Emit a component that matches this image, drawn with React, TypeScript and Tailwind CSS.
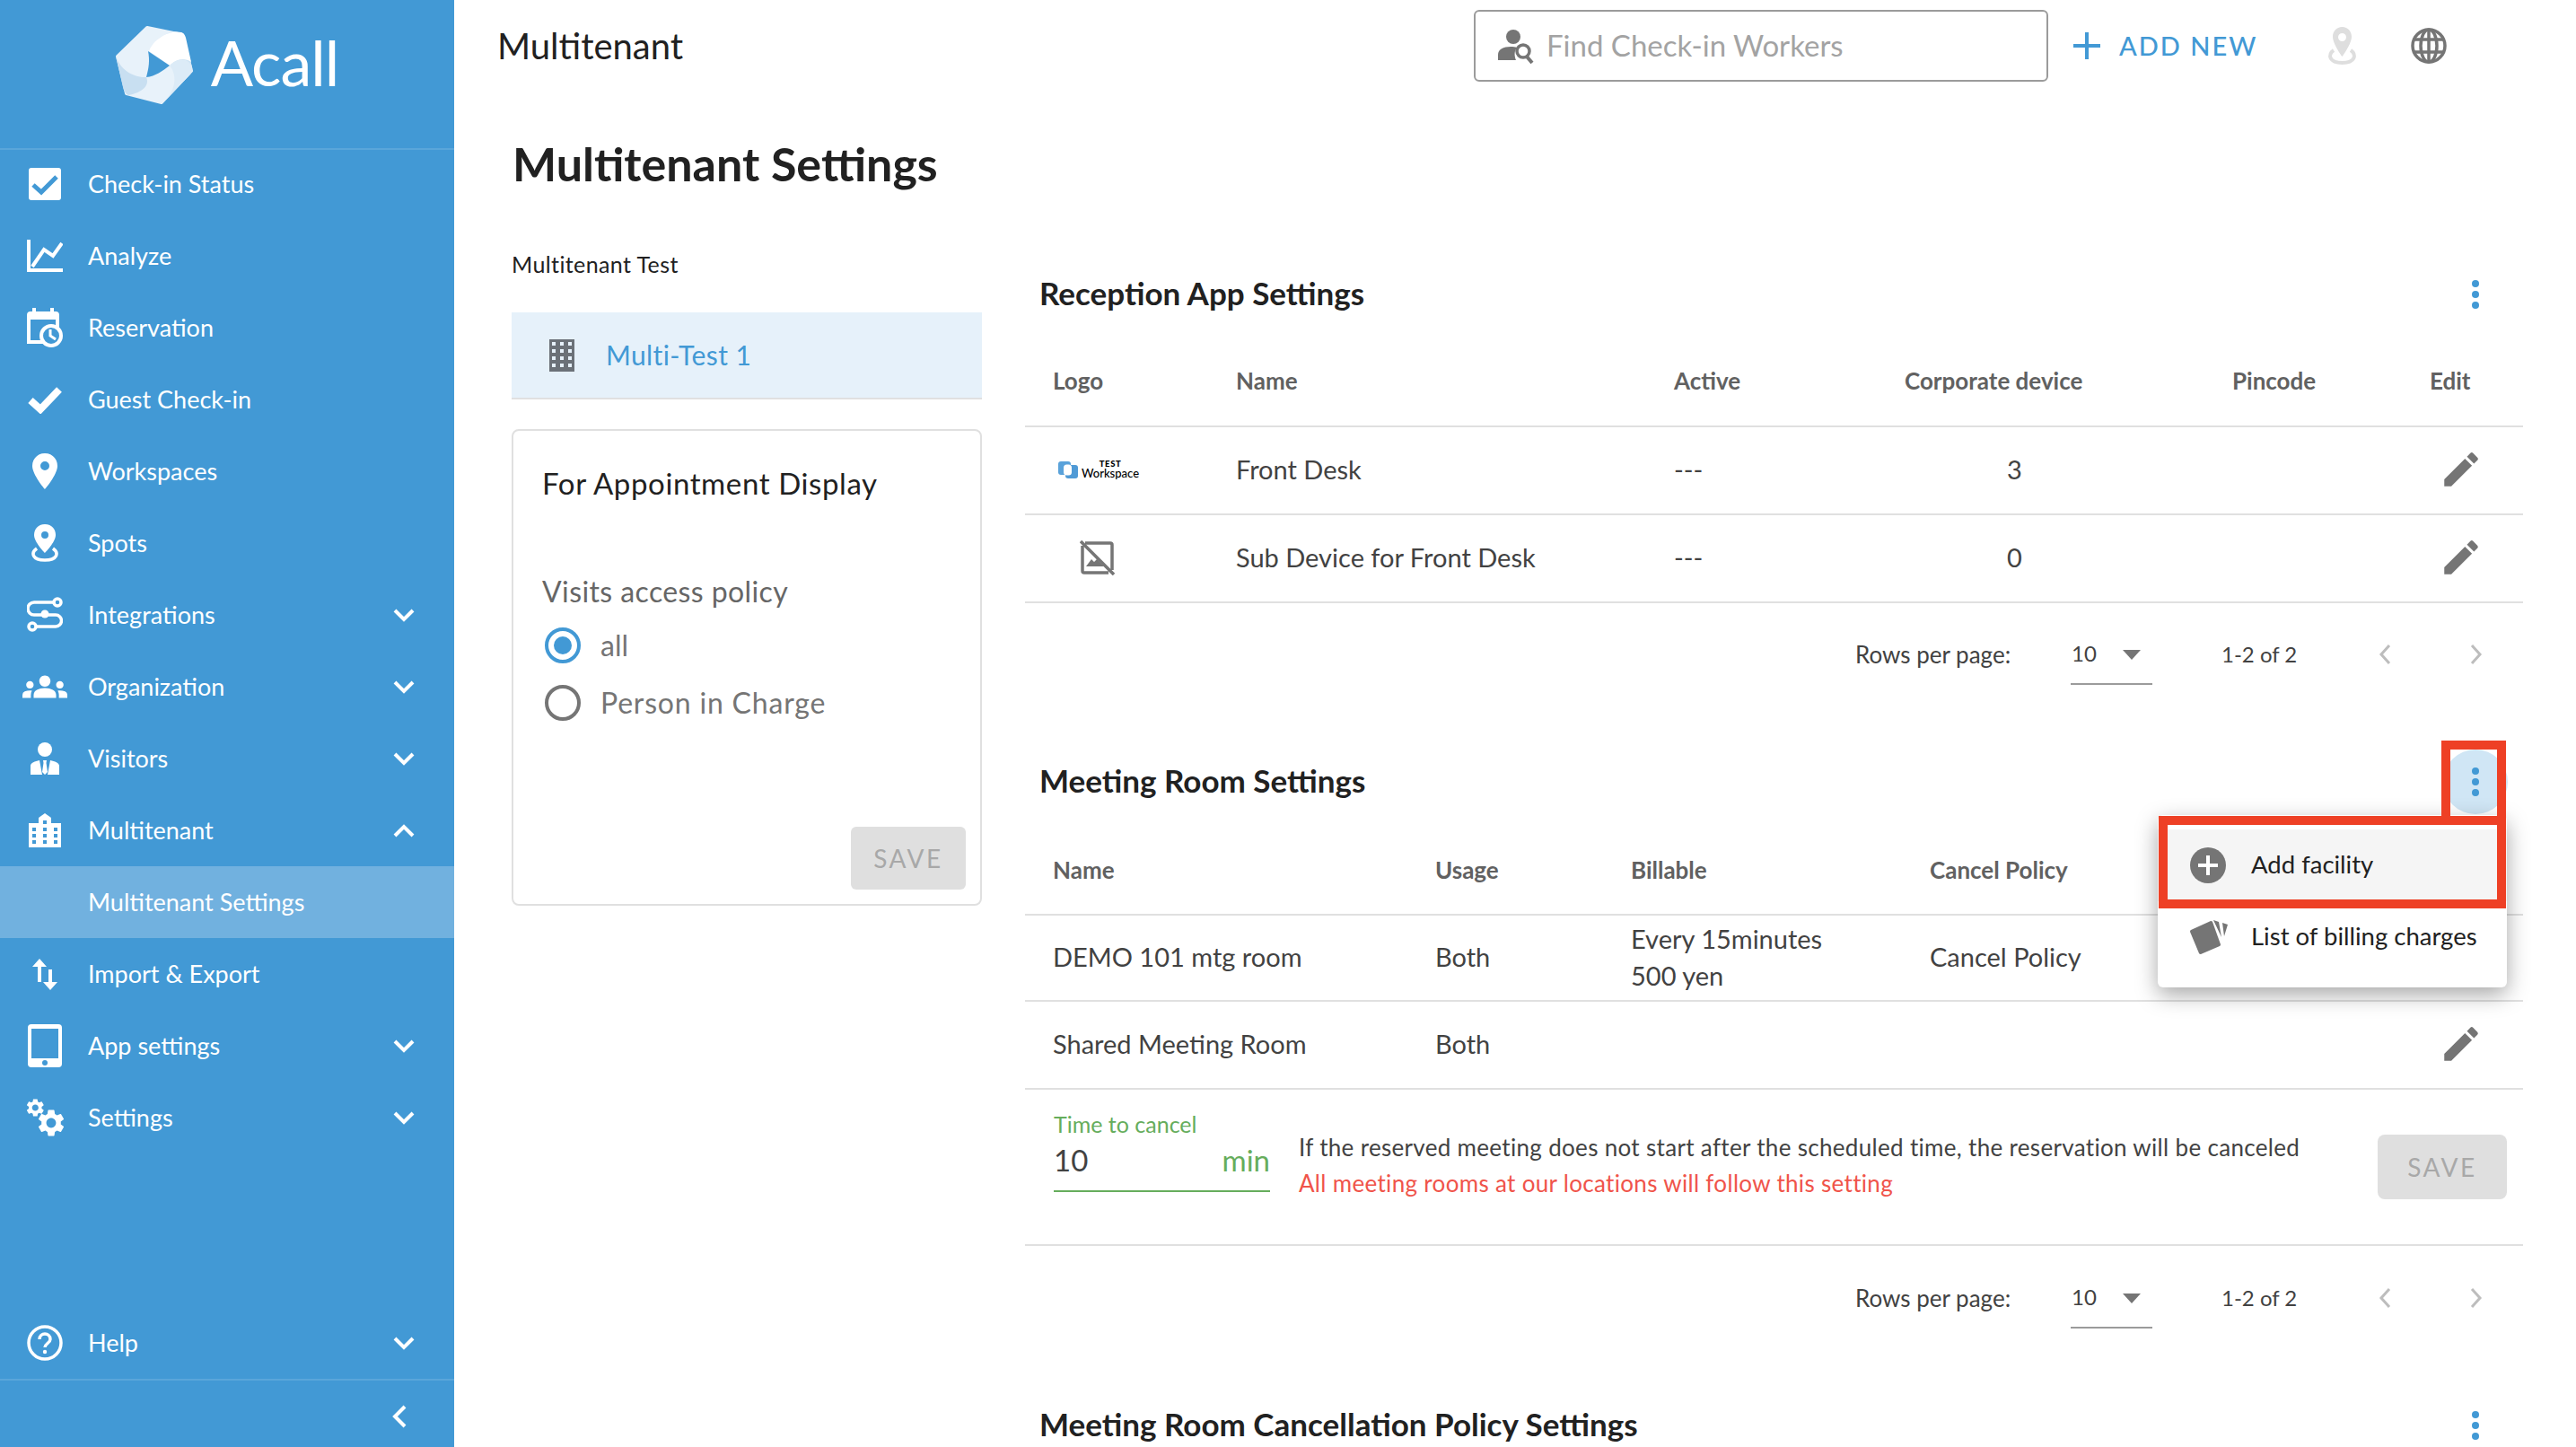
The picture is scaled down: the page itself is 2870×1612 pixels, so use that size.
import React from 'react';
import { MdEdit, MdGroups } from 'react-icons/md';

const GEAR =
  'M19.14 12.94c.04-.3.06-.61.06-.94 0-.32-.02-.64-.07-.94l2.03-1.58c.18-.14.23-.41.12-.61l-1.92-3.32c-.12-.22-.37-.29-.59-.22l-2.39.96c-.5-.38-1.03-.7-1.62-.94l-.36-2.54c-.04-.24-.24-.41-.48-.41h-3.84c-.24 0-.43.17-.47.41l-.36 2.54c-.59.24-1.13.57-1.62.94l-2.39-.96c-.22-.08-.47 0-.59.22L2.74 8.87c-.12.21-.08.47.12.61l2.03 1.58c-.05.3-.09.63-.09.94s.02.64.07.94l-2.03 1.58c-.18.14-.23.41-.12.61l1.92 3.32c.12.22.37.29.59.22l2.39-.96c.5.38 1.03.7 1.62.94l.36 2.54c.05.24.24.41.48.41h3.84c.24 0 .44-.17.47-.41l.36-2.54c.59-.24 1.13-.56 1.62-.94l2.39.96c.22.08.47 0 .59-.22l1.92-3.32c.12-.22.07-.47-.12-.61l-2.01-1.58zM12 15.6c-1.98 0-3.6-1.62-3.6-3.6s1.62-3.6 3.6-3.6 3.6 1.62 3.6 3.6-1.62 3.6-3.6 3.6z';

const BLUE = '#4299d5';

// sidebar icons, drawn in the pixel size they have in the screen
const CheckStatusIcon = () => (
  <svg width="36" height="36" viewBox="0 0 36 36">
    <rect width="36" height="36" rx="3" fill="#fff" />
    <path d="M5 19l9 8L31 10" fill="none" stroke={BLUE} strokeWidth="5" />
  </svg>
);

const AnalyzeIcon = () => (
  <svg width="40" height="36" viewBox="0 0 40 36">
    <path d="M2 0v34h38" fill="none" stroke="#fff" strokeWidth="4" />
    <path d="M6 30L19 11l10 7L39 4" fill="none" stroke="#fff" strokeWidth="4" />
  </svg>
);

const ReservationIcon = () => (
  <svg width="40" height="44" viewBox="0 0 40 44">
    <path d="M6 0h4v4h16V0h4v4h2a4 4 0 014 4v32H0V8a4 4 0 014-4h2z" fill="#fff" />
    <rect x="4" y="13" width="28" height="23" fill={BLUE} />
    <circle cx="27" cy="31" r="11" fill={BLUE} stroke="#fff" strokeWidth="4" />
    <path d="M26 24v7l6 4" fill="none" stroke="#fff" strokeWidth="3" />
  </svg>
);

const GuestCheckIcon = () => (
  <svg width="38" height="31" viewBox="0 0 38 31">
    <path d="M3 16l11 10L35 4" fill="none" stroke="#fff" strokeWidth="8" />
  </svg>
);

const WorkspacesIcon = () => (
  <svg width="28" height="40" viewBox="0 0 28 40">
    <path
      fillRule="evenodd"
      fill="#fff"
      d="M14 0C6 0 0 6 0 14c0 10 14 26 14 26s14-16 14-26C28 6 22 0 14 0zm0 9a5 5 0 110 10 5 5 0 010-10z"
    />
  </svg>
);

const SpotsIcon = () => (
  <svg width="32" height="42" viewBox="0 0 32 42">
    <path
      fillRule="evenodd"
      fill="#fff"
      d="M16 0C8 0 4 6 4 12c0 8 12 20 12 20s12-12 12-20c0-6-4-12-12-12zm0 8a4 4 0 110 8 4 4 0 010-8z"
    />
    <path d="M7 27C0 32 2 40 16 40s16-8 9-13" fill="none" stroke="#fff" strokeWidth="3.5" />
  </svg>
);

const IntegrationsIcon = () => (
  <svg width="40" height="40" viewBox="0 0 40 40" fill="none" stroke="#fff" strokeWidth="3.5">
    <circle cx="34" cy="6" r="4" />
    <circle cx="6" cy="33" r="4" />
    <path d="M30 6H8a6 6 0 000 14h24a6 6 0 010 13H10" />
    <circle cx="20" cy="19" r="4.5" fill="#fff" stroke="none" />
  </svg>
);

const VisitorsIcon = () => (
  <svg width="32" height="36" viewBox="0 0 32 36" fill="#fff">
    <circle cx="16" cy="8" r="8" />
    <path d="M0 36V26c0-3 5-5 10-6l3 16zM32 36V26c0-3-5-5-10-6l-3 16z" />
    <path d="M14 20h4l-.5 3 1.5 10-3 3-3-3 1.5-10z" />
  </svg>
);

const BuildingIcon = () => {
  const windows = [4, 16, 28].flatMap((x) => [16, 23, 30].map((y) => [x, y]));
  return (
    <svg width="36" height="38" viewBox="0 0 36 38">
      <path d="M0 11h11V5l7-5 7 5v6h11v27H0z" fill="#fff" />
      {windows.map(([x, y]) => (
        <rect key={`${x}-${y}`} x={x} y={y} width="4" height="4" fill={BLUE} />
      ))}
      <rect x="16" y="8" width="4" height="4" fill={BLUE} />
    </svg>
  );
};

const ImportIcon = () => (
  <svg width="28" height="35" viewBox="0 0 28 35" fill="#fff">
    <path d="M0 9l8-9 8 9h-6v17H6V9zM28 26l-8 9-8-9h6V12h4v14z" />
  </svg>
);

const TabletIcon = () => (
  <svg width="38" height="48" viewBox="0 0 38 48">
    <rect width="38" height="48" rx="4" fill="#fff" />
    <rect x="4" y="5" width="30" height="33" fill={BLUE} />
    <circle cx="19" cy="43" r="3" fill={BLUE} />
  </svg>
);

const SettingsIcon = () => (
  <svg width="42" height="42" viewBox="0 0 42 42" fill="#fff">
    <path d={GEAR} transform="translate(-1.7 -2)" />
    <path d={GEAR} transform="translate(10 9) scale(1.5)" />
  </svg>
);

const HelpIcon = () => (
  <svg width="40" height="40" viewBox="0 0 40 40" fill="none" stroke="#fff" strokeWidth="3.5">
    <circle cx="20" cy="20" r="18" />
    <path d="M14 16c0-4 3-6 6-6s6 2 6 6c0 4-6 5-6 9" />
    <circle cx="20" cy="30" r="2.2" fill="#fff" stroke="none" />
  </svg>
);

const Chevron = ({ up }: { up?: boolean }) => (
  <svg width="24" height="15" viewBox="0 0 24 15">
    <path d={up ? 'M2 13L12 3l10 10' : 'M2 2l10 10L22 2'} fill="none" stroke="#fff" strokeWidth="4" />
  </svg>
);

const navItems = [
  { label: 'Check-in Status', icon: <CheckStatusIcon /> },
  { label: 'Analyze', icon: <AnalyzeIcon /> },
  { label: 'Reservation', icon: <ReservationIcon /> },
  { label: 'Guest Check-in', icon: <GuestCheckIcon /> },
  { label: 'Workspaces', icon: <WorkspacesIcon /> },
  { label: 'Spots', icon: <SpotsIcon /> },
  { label: 'Integrations', icon: <IntegrationsIcon />, arrow: 'down' },
  { label: 'Organization', icon: <MdGroups size={50} />, arrow: 'down' },
  { label: 'Visitors', icon: <VisitorsIcon />, arrow: 'down' },
  { label: 'Multitenant', icon: <BuildingIcon />, arrow: 'up' },
  { label: 'Multitenant Settings', active: true },
  { label: 'Import & Export', icon: <ImportIcon /> },
  { label: 'App settings', icon: <TabletIcon />, arrow: 'down' },
  { label: 'Settings', icon: <SettingsIcon />, arrow: 'down' },
];

type NavItem = { label: string; icon?: React.ReactNode; arrow?: string; active?: boolean };

const NavRow = ({ item }: { item: NavItem }) => (
  <div className={`flex h-[80px] items-center ${item.active ? 'bg-[#71b1df]' : ''}`}>
    <div className="flex w-[98px] shrink-0 justify-center pl-[2px]">{item.icon}</div>
    <span className="text-[27px]">{item.label}</span>
    {item.arrow && (
      <span className="mr-[44px] ml-auto flex">
        <Chevron up={item.arrow === 'up'} />
      </span>
    )}
  </div>
);

const Logo = () => (
  <div className="flex items-center">
    <svg width="86" height="87" viewBox="0 0 86 87">
      <path d="M35 2L74 10 84 50 51 85 12 75 2 34z" fill="#e8f2fa" stroke="#e8f2fa" strokeWidth="4" strokeLinejoin="round" />
      <path d="M35 0C30 8 31 20 37 28L60 44C68 37 78 36 85 46L75 8C62 4 46 10 37 28 31 20 30 8 35 0z" fill="#cfe4f4" />
      <path d="M37 28C42 14 60 4 73 7 76 8 77 10 78 13L84 40C75 34 66 38 60 44z" fill="#fff" />
      <path d="M0 33C4 48 20 58 34 57 38 66 30 74 14 77 11 76 9 72 8 68z" fill="#c8dff1" />
      <path d="M60 44C70 34 82 36 85 46 86 50 84 53 82 55L54 84C68 70 68 54 60 44z" fill="#dcebf7" />
      <path d="M36 28L60 44C52 50 44 56 34 57 37 46 38 38 36 28z" fill={BLUE} />
    </svg>
    <span className="-mt-[7px] ml-[20px] text-[70px] leading-none tracking-[-1px]">Acall</span>
  </div>
);

const Sidebar = () => (
  <aside className="flex h-full w-[506px] shrink-0 flex-col bg-[#4299d5] text-white">
    <div className="flex h-[167px] shrink-0 items-center justify-center border-b-2 border-[#5aa6da] pb-[21px]">
      <Logo />
    </div>
    <div className="-mt-[2px]">
      {navItems.map((item) => (
        <NavRow key={item.label} item={item} />
      ))}
    </div>
    <div className="mt-auto">
      <NavRow item={{ label: 'Help', icon: <HelpIcon />, arrow: 'down' }} />
    </div>
    <div className="flex h-[76px] items-center border-t-2 border-[#5aa6da]">
      <svg className="mt-[6px] ml-[437px]" width="16" height="26" viewBox="0 0 16 26">
        <path d="M14 2L3 13l11 11" fill="none" stroke="#fff" strokeWidth="4" />
      </svg>
    </div>
  </aside>
);

const Header = () => (
  <header className="flex h-[102px] shrink-0 items-center pl-[48px]">
    <h1 className="w-[1088px] text-[40px] text-[#212121]">Multitenant</h1>
    <div className="flex h-[80px] w-[640px] items-center rounded-[6px] border-2 border-[#9b9b9b] pl-[25px]">
      <svg width="42" height="40" viewBox="0 0 42 40" fill="#757575">
        <circle cx="17" cy="10" r="8" />
        <path d="M0 36v-6c0-6 6-9 14-9 3 0 5 .4 7 1-3 4-3 9-1 14z" />
        <circle cx="28" cy="26" r="7" fill="none" stroke="#757575" strokeWidth="3.5" />
        <path d="M32 32l6 7" stroke="#757575" strokeWidth="4" />
      </svg>
      <span className="ml-[12px] text-[33px] text-[#a3a3a3]">Find Check-in Workers</span>
    </div>
    <svg className="ml-[28px]" width="30" height="30" viewBox="0 0 30 30">
      <path d="M15 0v30M0 15h30" stroke={BLUE} strokeWidth="4" />
    </svg>
    <span className="ml-[21px] text-[29px] font-medium tracking-[2px] text-[#4299d5]">ADD NEW</span>
    <svg className="ml-[78px]" width="33" height="42" viewBox="0 0 33 42" fill="#dedede">
      <path
        fillRule="evenodd"
        d="M16.5 0C10 0 6 5 6 11c0 8 10.500 22 10.500 22S27 19 27 11c0-6-4-11-10.500-11zm0 7a4.500 4.500 0 110 9 4.500 4.500 0 010-9z"
      />
      <path d="M7 26C0 31 2 40 16.500 40S33 31 26 26" fill="none" stroke="#dedede" strokeWidth="4" />
    </svg>
    <svg className="ml-[60px]" width="40" height="40" viewBox="0 0 40 40" fill="none" stroke="#757575" strokeWidth="3.5">
      <circle cx="20" cy="20" r="18" />
      <ellipse cx="20" cy="20" rx="9" ry="18" />
      <path d="M20 2v36M3 13h34M3 27h34" />
    </svg>
  </header>
);

const LeftPanel = () => (
  <div className="flex w-[524px] shrink-0 flex-col">
    <div className="flex h-[62px] items-center text-[25px] tracking-[0.4px] text-[#212121]">Multitenant Test</div>
    <div className="mt-[22px] flex h-[97px] items-center border-b-2 border-[#e0e0e0] bg-[#e6f1fa] pl-[42px]">
      <svg width="28" height="36" viewBox="0 0 28 36">
        <rect width="28" height="36" fill="#6b7178" />
        {[3, 12, 21].flatMap((x) =>
          [3, 11, 19, 27].map((y) => <rect key={`${x}-${y}`} x={x} y={y} width="4" height="4" fill="#e6f1fa" />),
        )}
      </svg>
      <span className="ml-[35px] text-[30px] tracking-[0.4px] text-[#4299d5]">Multi-Test 1</span>
    </div>
    <div className="mt-[33px] flex h-[531px] flex-col rounded-[8px] border-2 border-[#e0e0e0] pt-[39px] pr-[16px] pb-[16px] pl-[32px]">
      <div className="flex h-[40px] items-center text-[33px] tracking-[0.6px] text-[#212121]">For Appointment Display</div>
      <div className="mt-[80px] flex h-[40px] items-center text-[32px] tracking-[0.4px] text-[#666]">Visits access policy</div>
      <div className="mt-[8px] flex h-[64px] items-center text-[32px] text-[#757575]">
        <span className="ml-[3px] flex h-[40px] w-[40px] items-center justify-center rounded-full border-4 border-[#4299d5]">
          <span className="h-[20px] w-[20px] rounded-full bg-[#4299d5]" />
        </span>
        <span className="ml-[22px]">all</span>
      </div>
      <div className="flex h-[64px] items-center text-[32px] tracking-[0.8px] text-[#757575]">
        <span className="ml-[3px] h-[40px] w-[40px] rounded-full border-4 border-[#757575]" />
        <span className="ml-[22px]">Person in Charge</span>
      </div>
      <button className="mt-auto flex h-[70px] w-[128px] items-center justify-center self-end rounded-[6px] bg-[#dfdfdf] text-[28px] tracking-[2.5px] text-[#a8a8a8]">
        SAVE
      </button>
    </div>
  </div>
);

const Dots = () => (
  <svg width="8" height="32" viewBox="0 0 8 32" fill={BLUE}>
    <circle cx="4" cy="4" r="4" />
    <circle cx="4" cy="16" r="4" />
    <circle cx="4" cy="28" r="4" />
  </svg>
);

const SectionHead = ({ title, open }: { title: string; open?: boolean }) => (
  <div className="flex h-[64px] items-center pr-[17px] pl-[16px]">
    <h2 className="mb-[3px] text-[35px] font-bold text-[#212121]">{title}</h2>
    <span
      className={`ml-auto flex h-[72px] w-[72px] shrink-0 items-center justify-center rounded-full ${open ? 'bg-[#d0e6f5]' : ''}`}
    >
      <Dots />
    </span>
  </div>
);

const Pencil = () => (
  <div className="flex justify-end pr-[44px] text-[#757575]">
    <MdEdit size={50} />
  </div>
);

const Pagination = ({ height }: { height: string }) => (
  <div className={`flex items-center pl-[925px] text-[#424242] ${height}`}>
    <span className="w-[240px] text-[26px]">Rows per page:</span>
    <div className="flex h-[68px] w-[91px] items-center border-b-2 border-[#9b9b9b] text-[24px]">
      <span className="ml-[1px]">10</span>
      <svg className="mt-[2px] ml-[29px]" width="20" height="11" viewBox="0 0 20 11">
        <path d="M0 0h20L10 11z" fill="#757575" />
      </svg>
    </div>
    <span className="ml-[77px] w-[82px] text-[24px] whitespace-nowrap">1-2 of 2</span>
    <svg className="ml-[93px]" width="14" height="24" viewBox="0 0 14 24">
      <path d="M12 2L3 12l9 10" fill="none" stroke="#bdbdbd" strokeWidth="3" />
    </svg>
    <svg className="ml-[88px]" width="14" height="24" viewBox="0 0 14 24">
      <path d="M2 2l9 10-9 10" fill="none" stroke="#bdbdbd" strokeWidth="3" />
    </svg>
  </div>
);

const NoImageIcon = () => (
  <svg className="ml-[30px]" width="39" height="39" viewBox="0 0 39 39" fill="none" stroke="#757575" strokeWidth="3.5">
    <path d="M6 3h28a2 2 0 012 2v28M32 36H5a2 2 0 01-2-2V6" />
    <path d="M1 1l37 37" />
    <path d="M7 29l6-8 3 3 3-3 8 8z" fill="#757575" stroke="none" />
  </svg>
);

const ReceptionLogo = () => (
  <div className="flex items-center pl-[6px]">
    <svg width="22" height="19" viewBox="0 0 22 19">
      <rect width="14" height="15" rx="3" fill="#5aa2da" />
      <rect x="8" y="4" width="14" height="15" rx="3" fill="#4f9ad6" />
      <rect x="6" y="3.500" width="9" height="12" rx="3.500" fill="#fff" />
    </svg>
    <div className="ml-[4px] flex flex-col items-center text-black">
      <span className="text-[9.5px] leading-[9px] font-black tracking-[0.6px]">TEST</span>
      <span className="text-[13px] leading-[13px] font-medium whitespace-nowrap">Workspace</span>
    </div>
  </div>
);

const Reception = () => {
  const cols = 'grid grid-cols-[235px_488px_257px_365px_220px_104px] items-center border-b-2 border-[#e0e0e0]';
  const rows = [
    { logo: <ReceptionLogo />, name: 'Front Desk', device: '3' },
    { logo: <NoImageIcon />, name: 'Sub Device for Front Desk', device: '0' },
  ];
  return (
    <>
      <div className="mt-[32px]">
        <SectionHead title="Reception App Settings" />
      </div>
      <div className={`mt-[15px] h-[101px] text-[26px] font-bold text-[#616161] ${cols}`}>
        <span className="pl-[31px]">Logo</span>
        <span>Name</span>
        <span>Active</span>
        <span>Corporate device</span>
        <span>Pincode</span>
        <span>Edit</span>
      </div>
      {rows.map((r) => (
        <div key={r.name} className={`h-[98px] pb-[2px] text-[29px] text-[#424242] ${cols}`}>
          <div className="pl-[31px]">{r.logo}</div>
          <span>{r.name}</span>
          <span>---</span>
          <span className="pl-[114px]">{r.device}</span>
          <span />
          <Pencil />
        </div>
      ))}
      <Pagination height="h-[114px]" />
    </>
  );
};

const MeetingRooms = () => {
  const cols = 'grid grid-cols-[457px_218px_333px_661px] items-center border-b-2 border-[#e0e0e0]';
  return (
    <>
      <div className="mt-[53px]">
        <SectionHead title="Meeting Room Settings" open />
      </div>
      <div className={`mt-[17px] h-[100px] text-[26px] font-bold text-[#616161] ${cols}`}>
        <span className="pl-[31px]">Name</span>
        <span>Usage</span>
        <span>Billable</span>
        <span>Cancel Policy</span>
      </div>
      <div className={`h-[96px] pb-[2px] text-[29px] text-[#424242] ${cols}`}>
        <span className="pl-[31px]">DEMO 101 mtg room</span>
        <span>Both</span>
        <div className="leading-[41px]">
          <div>Every 15minutes</div>
          <div>500 yen</div>
        </div>
        <span>Cancel Policy</span>
      </div>
      <div className={`h-[98px] pb-[2px] text-[29px] text-[#424242] ${cols}`}>
        <span className="pl-[31px]">Shared Meeting Room</span>
        <span>Both</span>
        <span />
        <Pencil />
      </div>
      <div className="flex h-[174px] items-start border-b-2 border-[#e0e0e0] pl-[32px]">
        <div className="w-[241px] border-b-2 border-[#66ad5c] pt-[25px] pb-[7px]">
          <div className="flex h-[28px] items-center text-[25px] text-[#66ad5c]">Time to cancel</div>
          <div className="flex h-[52px] items-center justify-between text-[33px]">
            <span className="text-[#424242]">10</span>
            <span className="text-[#66ad5c]">min</span>
          </div>
        </div>
        <div className="ml-[32px] pt-[44px] text-[26px] leading-[40px] tracking-[0.32px]">
          <div className="text-[#424242]">If the reserved meeting does not start after the scheduled time, the reservation will be canceled</div>
          <div className="text-[#f0544a]">All meeting rooms at our locations will follow this setting</div>
        </div>
        <button className="mt-[50px] mr-[18px] ml-auto flex h-[72px] w-[144px] items-center justify-center rounded-[8px] bg-[#dfdfdf] text-[28px] tracking-[2.5px] text-[#a8a8a8]">
          SAVE
        </button>
      </div>
      <Pagination height="h-[116px]" />
    </>
  );
};

const RowMenu = () => (
  <>
    <div className="absolute top-[908px] left-[2404px] h-[192px] w-[389px] rounded-[6px] bg-white py-[16px] text-[27.5px] text-[#212121] shadow-[0_8px_24px_rgba(0,0,0,0.35)]">
      <div className="flex h-[80px] items-center bg-[#f5f5f5] pl-[36px]">
        <svg width="40" height="40" viewBox="0 0 40 40">
          <circle cx="20" cy="20" r="20" fill="#757575" />
          <path d="M20 9v22M9 20h22" stroke="#fff" strokeWidth="4" />
        </svg>
        <span className="mb-[2px] ml-[28px]">Add facility</span>
      </div>
      <div className="flex h-[80px] items-center pl-[35px]">
        <svg width="43" height="39" viewBox="0 0 43 39" fill="#757575">
          <path d="M2 11L24 1a2 2 0 012 1l9 25a2 2 0 01-1 2L13 38a2 2 0 01-2-1L1 13a2 2 0 011-2z" />
          <path d="M27 0l6 2 3 17zM37 3l6 2-4 13z" />
        </svg>
        <span className="mb-[2px] ml-[26px] whitespace-nowrap">List of billing charges</span>
      </div>
    </div>
    {/* red annotation boxes drawn over the screenshot */}
    <div className="absolute top-[825px] left-[2720px] h-[94px] w-[72px] border-[10px] border-[#ee4025]" />
    <div className="absolute top-[909px] left-[2405px] h-[103px] w-[387px] border-[10px] border-[#ee4025]" />
  </>
);

export default function App() {
  return (
    <div className="relative flex h-[1612px] w-[2870px] overflow-hidden bg-white [font-family:Lato,sans-serif]">
      <Sidebar />
      <main className="flex min-w-0 flex-1 flex-col">
        <Header />
        <div className="flex h-[162px] shrink-0 items-center pb-[3px] pl-[65px]">
          <h1 className="text-[52px] font-bold text-[#212121]">Multitenant Settings</h1>
        </div>
        <div className="flex flex-1 gap-[48px] pl-[64px]">
          <LeftPanel />
          <div className="flex w-[1669px] shrink-0 flex-col">
            <Reception />
            <MeetingRooms />
            <div className="mt-[52px]">
              <SectionHead title="Meeting Room Cancellation Policy Settings" />
            </div>
          </div>
        </div>
      </main>
      <RowMenu />
    </div>
  );
}
